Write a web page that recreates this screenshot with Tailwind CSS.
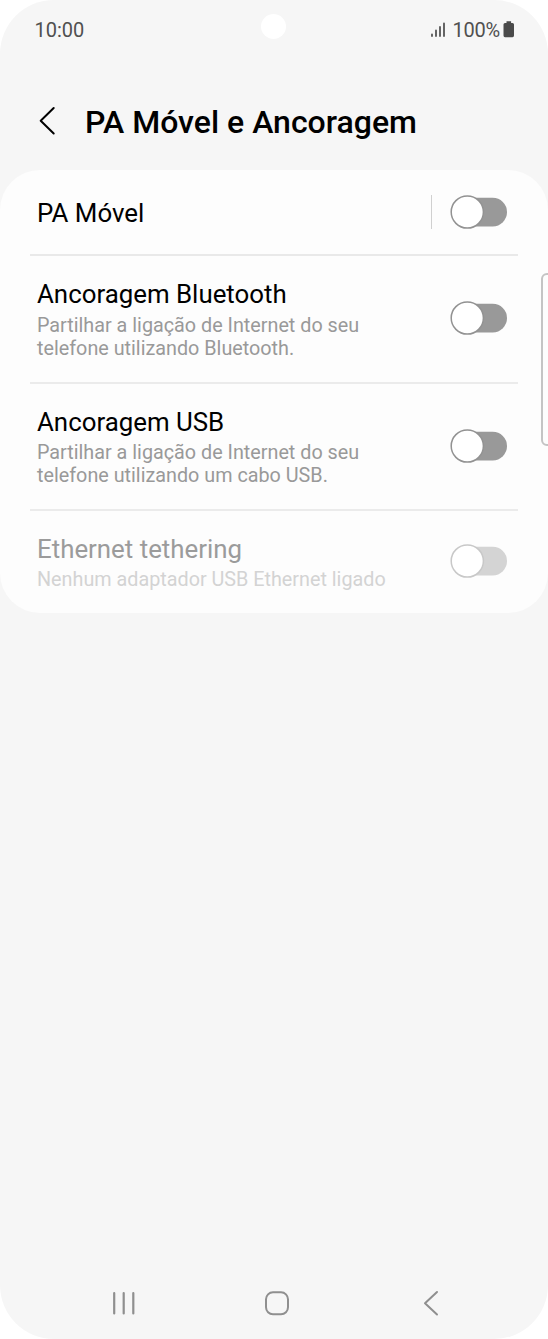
<!DOCTYPE html>
<html lang="pt">
<head>
<meta charset="utf-8">
<title>PA Móvel e Ancoragem</title>
<script src="https://cdn.jsdelivr.net/npm/@tailwindcss/browser@4"></script>
</head>
<body class="bg-white font-['Roboto',sans-serif]">
<div class="relative flex h-[1339px] w-[548px] flex-col overflow-hidden rounded-[54px] bg-[#f6f6f6]">
  <header class="flex h-[60px] items-start justify-between pl-[34.500px] pr-[33px] pt-[18px] text-[20px] leading-6 text-[#505050]">
    <span>10:00</span>
    <div class="flex">
      <svg class="mr-[6px] h-6 w-4" viewBox="0 0 16 24" stroke="#555" stroke-width="1.8" stroke-linecap="round"><path d="M2 16.500v1.500M6 12.500v5.500M10 9v9M14 5.500v12.500"/></svg>
      <span class="tracking-[-0.2px]">100%</span>
      <svg class="ml-[3px] h-6 w-[12px]" viewBox="0 0 12 24" fill="#4a4a4a"><path d="M3.500 3.200h4.600V5H9.500Q11 5 11 6.500V17.500Q11 19.200 9.500 19.200H2Q.5 19.200.5 17.500V6.500Q.5 5 2 5H3.500z"/></svg>
    </div>
  </header>
  <div class="absolute left-[261px] top-[14px] size-[25px] rounded-full bg-white"></div>

  <div class="flex h-[110px] items-start pl-[38px] pt-[42px]">
    <svg class="mt-[3px] h-[32px] w-[20px]" viewBox="0 0 20 32" fill="none" stroke="#000" stroke-width="2" stroke-linecap="round" stroke-linejoin="round"><path d="M15.700 3L2.700 15.700L15.700 28.500"/></svg>
    <h1 class="ml-[27px] whitespace-nowrap text-[32px] font-medium leading-[40px] text-black">PA Móvel e Ancoragem</h1>
  </div>

  <main class="flex h-[443px] flex-col rounded-[40px] bg-[#fdfdfd]">
    <section class="flex h-[84px] items-center justify-between pl-[37px] pr-[40px]">
      <h2 class="mt-[2px] text-[25.850px] leading-[32px] text-black">PA Móvel</h2>
      <div class="flex items-center">
        <div class="mr-[18px] h-[34px] w-px bg-[#d0d0d0]"></div>
        <svg class="h-[36px] w-[58px]" viewBox="0 0 58 36"><rect x="6" y="3.800" width="51" height="28.600" rx="14.300" fill="#999"/><circle cx="17.300" cy="18" r="16.100" fill="#fff" stroke="#929292" stroke-width="1.500"/></svg>
      </div>
    </section>
    <div class="ml-[30px] mr-[30px] h-[2px] bg-[#e9e9e9]"></div>
    <section class="flex h-[126px] items-center justify-between pl-[37px] pr-[40px]">
      <div class="whitespace-nowrap">
        <h2 class="text-[25.850px] leading-[32px] text-black">Ancoragem Bluetooth</h2>
        <p class="mt-[4px] text-[19.780px] leading-[23.500px] text-[#999]">Partilhar a ligação de Internet do seu<br>telefone utilizando Bluetooth.</p>
      </div>
      <svg class="mb-[3px] h-[36px] w-[58px]" viewBox="0 0 58 36"><rect x="6" y="3.800" width="51" height="28.600" rx="14.300" fill="#999"/><circle cx="17.300" cy="18" r="16.100" fill="#fff" stroke="#929292" stroke-width="1.500"/></svg>
    </section>
    <div class="ml-[30px] mr-[30px] h-[2px] bg-[#ebebeb]"></div>
    <section class="flex h-[125px] items-center justify-between pl-[37px] pr-[40px]">
      <div class="whitespace-nowrap">
        <h2 class="text-[25.850px] leading-[32px] text-black">Ancoragem USB</h2>
        <p class="mt-[3px] text-[19.780px] leading-[23.500px] text-[#999]">Partilhar a ligação de Internet do seu<br>telefone utilizando um cabo USB.</p>
      </div>
      <svg class="mb-[2px] h-[36px] w-[58px]" viewBox="0 0 58 36"><rect x="6" y="3.800" width="51" height="28.600" rx="14.300" fill="#999"/><circle cx="17.300" cy="18" r="16.100" fill="#fff" stroke="#929292" stroke-width="1.500"/></svg>
    </section>
    <div class="ml-[30px] mr-[30px] h-[2px] bg-[#ebebeb]"></div>
    <section class="flex h-[102px] items-center justify-between pl-[37px] pr-[40px]">
      <div class="mt-px whitespace-nowrap">
        <h2 class="text-[25.850px] leading-[32px] text-[#9b9b9b]">Ethernet tethering</h2>
        <p class="mt-[3px] text-[19.780px] leading-[23.500px] text-[#d3d3d3]">Nenhum adaptador USB Ethernet ligado</p>
      </div>
      <svg class="mb-[2px] h-[36px] w-[58px]" viewBox="0 0 58 36"><rect x="6" y="3.800" width="51" height="28.600" rx="14.300" fill="#d4d4d4"/><circle cx="17.300" cy="18" r="16.100" fill="#fff" stroke="#c8c8c8" stroke-width="1.500"/></svg>
    </section>
  </main>

  <nav class="mt-auto flex h-[72px] items-center pl-[108px]">
    <svg class="h-[32px] w-[32px]" viewBox="0 0 32 32" stroke="#8f8f8f" stroke-width="2.200" stroke-linecap="round"><path d="M6.200 6v20.500M15.700 6v20.500M25.300 6v20.500"/></svg>
    <svg class="ml-[121px] h-[32px] w-[32px]" viewBox="0 0 32 32" fill="none" stroke="#8f8f8f" stroke-width="2"><rect x="5" y="5.300" width="22" height="22" rx="7"/></svg>
    <svg class="ml-[122px] h-[32px] w-[32px]" viewBox="0 0 32 32" fill="none" stroke="#8f8f8f" stroke-width="2" stroke-linecap="round" stroke-linejoin="round"><path d="M22 5L10 16.300L22 27.500"/></svg>
  </nav>
  <div class="absolute left-[541px] top-[273px] h-[173px] w-[12px] rounded-[7px] border-2 border-[#c4c4c4] bg-[#fdfdfd]"></div>
</div>
</body>
</html>
